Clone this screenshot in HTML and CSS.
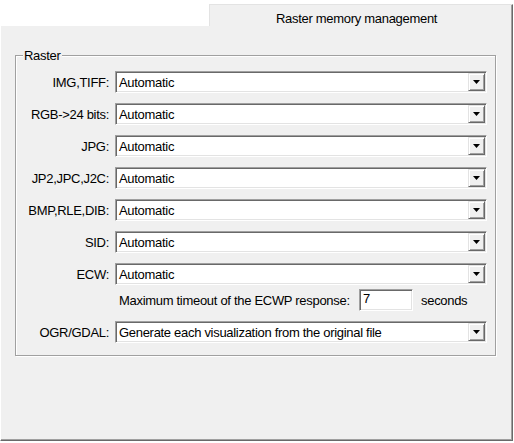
FILE: index.html
```html
<!DOCTYPE html>
<html>
<head>
<meta charset="utf-8">
<link rel="stylesheet" href="styles.css">
</head>
<body>
<div class="window">
  <div class="tabstrip">
    <div class="tab">Raster memory management</div>
  </div>
  <div class="panel">
    <div class="group">
      <span class="legend">Raster</span>
      <div class="rows">
        <div class="row"><span class="lbl">IMG,TIFF:</span><div class="combo"><span class="val">Automatic</span><span class="btn"><svg width="7" height="4" viewBox="0 0 7 4"><polygon points="0,0 7,0 3.5,4" fill="#000"/></svg></span></div></div>
        <div class="row"><span class="lbl">RGB-&gt;24 bits:</span><div class="combo"><span class="val">Automatic</span><span class="btn"><svg width="7" height="4" viewBox="0 0 7 4"><polygon points="0,0 7,0 3.5,4" fill="#000"/></svg></span></div></div>
        <div class="row"><span class="lbl">JPG:</span><div class="combo"><span class="val">Automatic</span><span class="btn"><svg width="7" height="4" viewBox="0 0 7 4"><polygon points="0,0 7,0 3.5,4" fill="#000"/></svg></span></div></div>
        <div class="row"><span class="lbl">JP2,JPC,J2C:</span><div class="combo"><span class="val">Automatic</span><span class="btn"><svg width="7" height="4" viewBox="0 0 7 4"><polygon points="0,0 7,0 3.5,4" fill="#000"/></svg></span></div></div>
        <div class="row"><span class="lbl">BMP,RLE,DIB:</span><div class="combo"><span class="val">Automatic</span><span class="btn"><svg width="7" height="4" viewBox="0 0 7 4"><polygon points="0,0 7,0 3.5,4" fill="#000"/></svg></span></div></div>
        <div class="row"><span class="lbl">SID:</span><div class="combo"><span class="val">Automatic</span><span class="btn"><svg width="7" height="4" viewBox="0 0 7 4"><polygon points="0,0 7,0 3.5,4" fill="#000"/></svg></span></div></div>
        <div class="subgroup">
          <div class="row"><span class="lbl">ECW:</span><div class="combo"><span class="val">Automatic</span><span class="btn"><svg width="7" height="4" viewBox="0 0 7 4"><polygon points="0,0 7,0 3.5,4" fill="#000"/></svg></span></div></div>
          <div class="row timeout"><span class="lbl"></span><span class="ttext">Maximum timeout of the ECWP response:</span><div class="edit">7</div><span class="unit">seconds</span></div>
        </div>
        <div class="row"><span class="lbl">OGR/GDAL:</span><div class="combo"><span class="val">Generate each visualization from the original file</span><span class="btn"><svg width="7" height="4" viewBox="0 0 7 4"><polygon points="0,0 7,0 3.5,4" fill="#000"/></svg></span></div></div>
      </div>
    </div>
  </div>
</div>
</body>
</html>
```
FILE: styles.css
```css
body {
  margin: 0;
  background: #fff;
  font-family: "Liberation Sans", Arial, sans-serif;
  font-size: 13px;
  letter-spacing: -0.3px;
  color: #000;
}
.window {
  width: 514px;
  height: 443px;
}
.tabstrip {
  height: 26px;
  box-sizing: border-box;
  padding: 4px 0 0 209px;
  display: flex;
}
.tab {
  width: 304px;
  height: 22px;
  box-sizing: border-box;
  background: #f0f0f0;
  border-top: 1px solid #e3e3e3;
  border-left: 1px solid #e3e3e3;
  border-right: 1px solid #696969;
  box-shadow: inset -1px 0 0 #a0a0a0;
  padding-left: 66px;
  line-height: 27px;
}
.panel {
  width: 513px;
  height: 415px;
  box-sizing: border-box;
  background: #f0f0f0;
  border-left: 1px solid #fff;
  border-right: 1px solid #696969;
  border-bottom: 1px solid #696969;
  box-shadow: inset -1px -1px 0 #a0a0a0;
  padding: 29px 0 0 14px;
}
.group {
  position: relative;
  width: 481px;
  height: 301px;
  box-sizing: border-box;
  border: 1px solid #a0a0a0;
  box-shadow: inset 1px 1px 0 #fff, 1px 1px 0 #fff;
  padding-top: 15px;
}
.legend {
  position: absolute;
  top: -8px;
  left: 7px;
  padding: 0 1px;
  background: #f0f0f0;
  line-height: 15px;
}
.rows {
  display: flex;
  flex-direction: column;
  gap: 10px;
}
.subgroup {
  display: flex;
  flex-direction: column;
  gap: 4px;
}
.row {
  display: flex;
  align-items: center;
}
.lbl {
  width: 93px;
  flex: none;
  text-align: right;
  margin-right: 6px;
  white-space: nowrap;
}
.combo {
  width: 372px;
  height: 22px;
  box-sizing: border-box;
  display: flex;
  align-items: center;
  background: #fff;
  border: 1px solid;
  border-color: #a0a0a0 #fff #fff #a0a0a0;
  box-shadow: inset 1px 1px 0 #696969, inset -1px -1px 0 #e3e3e3;
  padding-left: 3px;
}
.val {
  flex: 1;
  white-space: nowrap;
}
.btn {
  width: 17px;
  height: 18px;
  box-sizing: border-box;
  margin-right: 1px;
  display: flex;
  align-items: center;
  justify-content: center;
  background: #f0f0f0;
  border: 1px solid;
  border-color: #e3e3e3 #696969 #696969 #e3e3e3;
  box-shadow: inset 1px 1px 0 #fff, inset -1px -1px 0 #a0a0a0;
}
.ttext {
  width: 240px;
  margin-left: 4px;
  white-space: nowrap;
}
.edit {
  width: 54px;
  height: 22px;
  box-sizing: border-box;
  background: #fff;
  border: 1px solid;
  border-color: #a0a0a0 #fff #fff #a0a0a0;
  box-shadow: inset 1px 1px 0 #696969, inset -1px -1px 0 #e3e3e3;
  padding-left: 3px;
  line-height: 18px;
}
.unit {
  margin-left: 8px;
}
```
